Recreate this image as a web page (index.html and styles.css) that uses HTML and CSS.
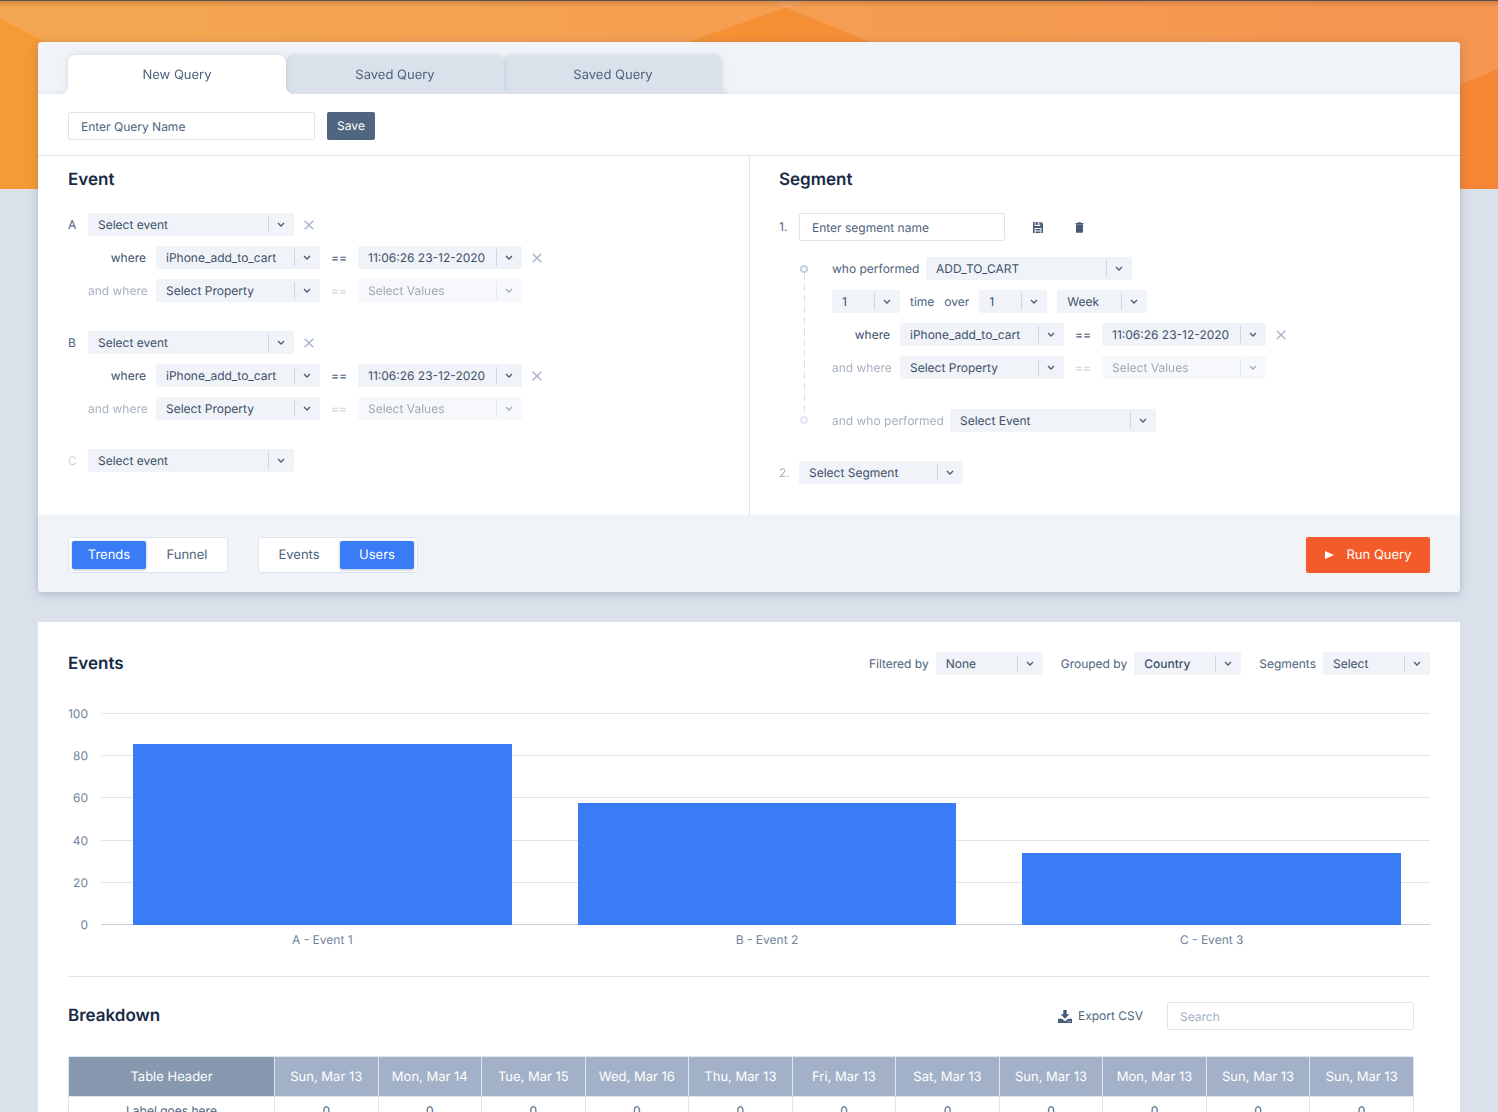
FILE: index.html
```html
<!DOCTYPE html>
<html lang="en">
<head>
<meta charset="utf-8">
<meta name="viewport" content="width=device-width, initial-scale=1">
<title>Query builder</title>
<link rel="stylesheet" href="styles.css">
</head>
<body>
<svg class="sprite" aria-hidden="true">
  <symbol id="drop" viewBox="0 0 27 23"><path d="M1.500 3v17" stroke="#cbd6e4" fill="none"/><path d="M11 10l3 3 3-3" fill="none" stroke="#465b75" stroke-width="1.3"/></symbol>
  <symbol id="cross" viewBox="0 0 10 10"><path d="M.7.7l8.600 8.600M9.300.7L.7 9.300" fill="none" stroke="#a2b1c8" stroke-width="1.3"/></symbol>
</svg>

<svg class="banner" viewBox="0 0 1498 189" preserveAspectRatio="none" aria-hidden="true">
  <defs>
    <linearGradient id="sun" x1="0" y1="0" x2="1" y2="0"><stop offset="0" stop-color="#f59b35"/><stop offset="1" stop-color="#f68535"/></linearGradient>
    <linearGradient id="edge" x1="0" y1="0" x2="0" y2="1"><stop offset="0" stop-color="#8a4a20" stop-opacity=".35"/><stop offset="1" stop-color="#8a4a20" stop-opacity="0"/></linearGradient>
  </defs>
  <path fill="url(#sun)" d="M0 0h1498v189H0z"/>
  <path fill="#f4f0ee" fill-opacity=".15" d="M0 0h808Q750 20 688 42Q340 150 44 41Q20 30 0 18z"/>
  <path fill="#f4f0ee" fill-opacity=".15" d="M768 0h730v69q-19 9-38 15Q1160 165 870 42Q815 20 768 0z"/>
  <path fill="url(#edge)" d="M0 0h1498v7H0z"/>
  <path fill="#57504f" d="M0 0h1498v1H0z"/>
</svg>

<main class="page">
  <section class="card query">
    <nav class="tabs">
      <button class="tab tab-active" type="button">New Query</button>
      <button class="tab" type="button">Saved Query</button>
      <button class="tab" type="button">Saved Query</button>
    </nav>
    <form class="name-bar">
      <input class="field field-wide" type="text" aria-label="Query name" placeholder="Enter Query Name">
      <button class="save" type="button">Save</button>
    </form>

    <div class="panels">
      <section class="panel">
        <h2>Event</h2>
        <div class="groups">
          <div class="group">
            <div class="row">
              <span class="index">A</span>
              <span class="pick pick-lg"><select aria-label="Event A"><option>Select event</option></select><svg><use href="#drop"/></svg></span>
              <button class="icon-btn" type="button" aria-label="Remove event A"><svg width="10" height="10"><use href="#cross"/></svg></button>
            </div>
            <div class="row indent">
              <span class="cond">where</span>
              <span class="pick pick-md"><select aria-label="Property"><option>iPhone_add_to_cart</option></select><svg><use href="#drop"/></svg></span>
              <span class="equals">==</span>
              <span class="pick pick-md"><select aria-label="Value"><option>11:06:26 23-12-2020</option></select><svg><use href="#drop"/></svg></span>
              <button class="icon-btn" type="button" aria-label="Remove condition"><svg width="10" height="10"><use href="#cross"/></svg></button>
            </div>
            <div class="row indent">
              <span class="cond faded">and where</span>
              <span class="pick pick-md"><select aria-label="Property"><option>Select Property</option></select><svg><use href="#drop"/></svg></span>
              <span class="equals faint">==</span>
              <span class="pick pick-md faded"><select aria-label="Value"><option>Select Values</option></select><svg><use href="#drop"/></svg></span>
            </div>
          </div>
          <div class="group">
            <div class="row">
              <span class="index">B</span>
              <span class="pick pick-lg"><select aria-label="Event B"><option>Select event</option></select><svg><use href="#drop"/></svg></span>
              <button class="icon-btn" type="button" aria-label="Remove event B"><svg width="10" height="10"><use href="#cross"/></svg></button>
            </div>
            <div class="row indent">
              <span class="cond">where</span>
              <span class="pick pick-md"><select aria-label="Property"><option>iPhone_add_to_cart</option></select><svg><use href="#drop"/></svg></span>
              <span class="equals">==</span>
              <span class="pick pick-md"><select aria-label="Value"><option>11:06:26 23-12-2020</option></select><svg><use href="#drop"/></svg></span>
              <button class="icon-btn" type="button" aria-label="Remove condition"><svg width="10" height="10"><use href="#cross"/></svg></button>
            </div>
            <div class="row indent">
              <span class="cond faded">and where</span>
              <span class="pick pick-md"><select aria-label="Property"><option>Select Property</option></select><svg><use href="#drop"/></svg></span>
              <span class="equals faint">==</span>
              <span class="pick pick-md faded"><select aria-label="Value"><option>Select Values</option></select><svg><use href="#drop"/></svg></span>
            </div>
          </div>
          <div class="group">
            <div class="row">
              <span class="index faint">C</span>
              <span class="pick pick-lg"><select aria-label="Event C"><option>Select event</option></select><svg><use href="#drop"/></svg></span>
            </div>
          </div>
        </div>
      </section>

      <section class="panel panel-split">
        <h2>Segment</h2>
        <div class="groups">
          <div class="segment">
            <div class="row">
              <span class="index">1.</span>
              <input class="field field-segment" type="text" aria-label="Segment name" placeholder="Enter segment name">
              <span class="tools">
                <button class="icon-btn" type="button" aria-label="Save segment"><svg width="10" height="11" viewBox="0 0 10 11"><path fill="#465b78" d="M0 0h1.600v3.900h5.600V0h1L10 1.800V11H8.400V6H1.600v5H0zM2.500 0h2.200v3H2.500zM5.700 0h.9v3h-.9zM2.500 7h5v1.400h-5zM2.500 9.400h5V11h-5z"/></svg></button>
                <button class="icon-btn" type="button" aria-label="Delete segment"><svg width="9" height="11" viewBox="0 0 9 11"><path fill="#465b78" d="M.5 1H3V.2h3V1h2.500v1.200h-8zM1 2.600h7V10a.8.8 0 0 1-.8.8H1.800A.8.8 0 0 1 1 10z"/></svg></button>
              </span>
            </div>
            <div class="steps">
              <div class="timeline" aria-hidden="true"><i class="dot"></i><i class="thread"></i><i class="dot faded"></i></div>
              <div class="step-list">
                <div class="group">
                  <div class="row">
                    <span class="lead">who performed</span>
                    <span class="pick pick-lg"><select aria-label="Performed event"><option>ADD_TO_CART</option></select><svg><use href="#drop"/></svg></span>
                  </div>
                  <div class="row">
                    <span class="pick pick-xs"><select aria-label="Times"><option>1</option></select><svg><use href="#drop"/></svg></span>
                    <span>time</span>
                    <span>over</span>
                    <span class="pick pick-xs"><select aria-label="Period count"><option>1</option></select><svg><use href="#drop"/></svg></span>
                    <span class="pick pick-sm"><select aria-label="Period"><option>Week</option></select><svg><use href="#drop"/></svg></span>
                  </div>
                  <div class="row">
                    <span class="cond">where</span>
                    <span class="pick pick-md"><select aria-label="Property"><option>iPhone_add_to_cart</option></select><svg><use href="#drop"/></svg></span>
                    <span class="equals">==</span>
                    <span class="pick pick-md"><select aria-label="Value"><option>11:06:26 23-12-2020</option></select><svg><use href="#drop"/></svg></span>
                    <button class="icon-btn" type="button" aria-label="Remove condition"><svg width="10" height="10"><use href="#cross"/></svg></button>
                  </div>
                  <div class="row">
                    <span class="cond faded">and where</span>
                    <span class="pick pick-md"><select aria-label="Property"><option>Select Property</option></select><svg><use href="#drop"/></svg></span>
                    <span class="equals faint">==</span>
                    <span class="pick pick-md faded"><select aria-label="Value"><option>Select Values</option></select><svg><use href="#drop"/></svg></span>
                  </div>
                </div>
                <div class="row">
                  <span class="lead lead-long faded">and who performed</span>
                  <span class="pick pick-lg"><select aria-label="Next event"><option>Select Event</option></select><svg><use href="#drop"/></svg></span>
                </div>
              </div>
            </div>
          </div>
          <div class="row">
            <span class="index faded">2.</span>
            <span class="pick pick-md"><select aria-label="Segment 2"><option>Select Segment</option></select><svg><use href="#drop"/></svg></span>
          </div>
        </div>
      </section>
    </div>

    <footer class="actions">
      <div class="toggle"><button class="on" type="button">Trends</button><button type="button">Funnel</button></div>
      <div class="toggle"><button type="button">Events</button><button class="on" type="button">Users</button></div>
      <button class="run" type="button"><svg width="9" height="8" viewBox="0 0 9 8"><path d="M0 0l9 4-9 4z" fill="#fff"/></svg>Run Query</button>
    </footer>
  </section>

  <section class="card results">
    <header class="results-head">
      <h2>Events</h2>
      <div class="filters">
        <label>Filtered by <span class="pick pick-filter"><select><option>None</option></select><svg><use href="#drop"/></svg></span></label>
        <label>Grouped by <span class="pick pick-filter strong"><select><option>Country</option></select><svg><use href="#drop"/></svg></span></label>
        <label>Segments <span class="pick pick-filter"><select><option>Select</option></select><svg><use href="#drop"/></svg></span></label>
      </div>
    </header>

    <figure class="chart">
      <ol class="scale"><li>100</li><li>80</li><li>60</li><li>40</li><li>20</li><li>0</li></ol>
      <div class="bars">
        <div class="bar" style="height:85.500%"></div>
        <div class="bar" style="height:57.500%"></div>
        <div class="bar" style="height:34%"></div>
      </div>
      <ul class="names"><li>A - Event 1</li><li>B - Event 2</li><li>C - Event 3</li></ul>
    </figure>

    <section class="breakdown">
      <header class="breakdown-head">
        <h2>Breakdown</h2>
        <button class="export" type="button"><svg width="14" height="13" viewBox="0 0 14 13"><path fill="#465b78" d="M5.300 0h3.400v4.300h2.700L7 8.700 2.600 4.300h2.700zM0 8.800h3.900L7 11.200l3.100-2.400H14V13H0z"/><path fill="#fff" d="M9.800 11.200h1v.8h-1zM11.700 11.200h1v.8h-1z"/></svg>Export CSV</button>
        <input class="field field-wide search" type="search" aria-label="Search" placeholder="Search">
      </header>
      <table>
        <thead><tr><th class="first">Table Header</th><th>Sun, Mar 13</th><th>Mon, Mar 14</th><th>Tue, Mar 15</th><th>Wed, Mar 16</th><th>Thu, Mar 13</th><th>Fri, Mar 13</th><th>Sat, Mar 13</th><th>Sun, Mar 13</th><th>Mon, Mar 13</th><th>Sun, Mar 13</th><th>Sun, Mar 13</th></tr></thead>
        <tbody><tr><td>Label goes here</td><td>0</td><td>0</td><td>0</td><td>0</td><td>0</td><td>0</td><td>0</td><td>0</td><td>0</td><td>0</td><td>0</td></tr></tbody>
      </table>
    </section>
  </section>
</main>
</body>
</html>
```

FILE: styles.css
```css
* { box-sizing: border-box; }

:root {
  --ink: #172b46;
  --text: #4d637e;
  --deep: #3d5069;
  --pale: #f0f3f8;
  --mist: #dae1eb;
  --line: #dfe5ed;
  --blue: #3a7bf6;
}

body {
  margin: 0;
  background: var(--mist);
  color: var(--text);
  font: 12px/16px Inter, "Liberation Sans", sans-serif;
  text-rendering: geometricPrecision;
}

button, input, select { font: inherit; color: inherit; margin: 0; text-rendering: inherit; }
button { border: 0; padding: 0; background: none; cursor: pointer; }
h2 { margin: 0; color: var(--ink); font-size: 17px; line-height: 20px; font-weight: 600; }
ol, ul, figure { margin: 0; padding: 0; list-style: none; }

.sprite { position: absolute; width: 0; height: 0; }
.banner { position: absolute; top: 0; left: 0; width: 100%; height: 189px; z-index: -1; }

.page { display: flex; flex-direction: column; gap: 30px; padding: 42px 38px 0; }
.card { background: #fff; }
.query { border-radius: 4px; box-shadow: 0 2px 10px rgba(70, 90, 120, .3); }

/* Tabs */
.tabs {
  display: flex;
  padding: 13px 30px 0;
  background: linear-gradient(to top, #e6eaf1, var(--pale) 4px);
  border-radius: 4px 4px 0 0;
}
.tab {
  position: relative;
  z-index: 1;
  width: 218px;
  height: 39px;
  border-radius: 8px 8px 0 0;
  background: var(--tab);
  font-size: 13px;
  filter: drop-shadow(0 0 3px rgba(70, 90, 120, .16));
  --tab: var(--mist);
}
.tab:nth-child(2) { z-index: 2; }
.tab-active { z-index: 3; --tab: #fff; }
.tab::before, .tab::after {
  content: "";
  position: absolute;
  bottom: 0;
  width: 8px;
  height: 8px;
}
.tab::before { right: 100%; background: radial-gradient(circle at 0 0, transparent 8px, var(--tab) 8px); }
.tab::after { left: 100%; background: radial-gradient(circle at 100% 0, transparent 8px, var(--tab) 8px); }

/* Fields */
.field {
  height: 28px;
  padding: 0 12px;
  border: 1px solid var(--line);
  border-radius: 2px;
  background: #fff;
  outline: 0;
}
.field::placeholder { color: var(--text); opacity: 1; }
.field-wide { width: 247px; }
.field-segment { width: 206px; }
.search::placeholder { color: #a3b1c6; }

.name-bar {
  position: relative;
  z-index: 4;
  display: flex;
  gap: 12px;
  padding: 18px 30px 15px;
  background: #fff;
  border-bottom: 1px solid var(--line);
}
.save { width: 48px; border-radius: 2px; background: #50657f; color: #fff; }

.pick { display: inline-grid; color: var(--deep); }
.pick select {
  grid-area: 1 / 1;
  width: 100%;
  height: 23px;
  padding: 0 30px 0 10px;
  border: 0;
  border-radius: 2px;
  background: var(--pale);
  appearance: none;
}
.pick svg { grid-area: 1 / 1; justify-self: end; width: 27px; height: 23px; pointer-events: none; }
.pick-lg { width: 206px; }
.pick-md { width: 164px; }
.pick-filter { width: 107px; }
.pick-sm { width: 90px; }
.pick-xs { width: 68px; }
.strong { font-weight: 500; }
.faded { opacity: .5; }
.faint { opacity: .3; }

/* Builder */
.panels { display: grid; grid-template-columns: 1fr 1fr; }
.panel { padding: 14px 30px 32px; }
.panel-split { border-left: 1px solid var(--line); padding-left: 29px; }
.groups { display: flex; flex-direction: column; gap: 29px; margin-top: 23px; }
.group { display: flex; flex-direction: column; gap: 10px; }
.row { display: flex; align-items: center; gap: 10px; white-space: nowrap; }
.index { width: 10px; }
.indent { padding-left: 20px; }
.cond { width: 58px; text-align: right; color: var(--deep); }
.cond.faded { color: var(--text); }
.lead { width: 84px; }
.lead-long { width: 108px; }
.equals { width: 18px; text-align: center; font-weight: 500; }
.icon-btn { display: flex; }
.tools { display: flex; gap: 32px; padding-left: 18px; }

.segment { display: flex; flex-direction: column; gap: 16px; }
.steps { display: flex; gap: 24px; padding-left: 21px; }
.step-list { display: flex; flex-direction: column; gap: 30px; }
.timeline { display: flex; flex-direction: column; align-items: center; width: 8px; padding: 8px 0; }
.dot { width: 8px; height: 8px; border: 2px solid #c3d0df; border-radius: 50%; }
.thread { flex: 1; width: 1px; background: repeating-linear-gradient(to bottom, #dae1eb 0 7px, transparent 7px 11px); }

/* Footer actions */
.actions {
  display: flex;
  gap: 30px;
  padding: 21px 30px 19px;
  background: var(--pale);
  border-radius: 0 0 4px 4px;
  box-shadow: 0 -1px 3px rgba(70, 90, 120, .08);
}
.toggle {
  display: flex;
  justify-content: space-between;
  width: 160px;
  height: 36px;
  padding: 3px;
  border: 1px solid var(--line);
  border-radius: 3px;
  background: #fff;
}
.toggle button { width: 74px; border-radius: 2px; font-size: 13px; }
.toggle .on { background: var(--blue); color: #fff; box-shadow: 0 1px 3px rgba(40, 60, 90, .35); }
.run {
  display: flex;
  align-items: center;
  justify-content: center;
  gap: 13px;
  width: 124px;
  margin-left: auto;
  border-radius: 2px;
  background: #f35b2a;
  color: #fff;
  font-size: 13px;
}

/* Results */
.results { padding: 30px 30px 0; }
.results-head, .breakdown-head { display: flex; align-items: center; }
.results-head { justify-content: space-between; }
.filters { display: flex; gap: 18px; }
.filters label { display: flex; align-items: center; gap: 7px; }

.chart { display: grid; grid-template-rows: 226px auto; margin-top: 31px; color: #71849d; line-height: 15px; }
.scale { grid-area: 1 / 1; display: flex; flex-direction: column; justify-content: space-between; }
.scale li { display: grid; grid-template-columns: 20px 1fr; gap: 13px; align-items: center; justify-items: end; }
.scale li::after { content: ""; width: 100%; height: 1px; background: var(--line); }
.scale li:last-child::after { background: #c5cfde; }
.bars, .names { display: grid; grid-template-columns: repeat(3, 1fr); gap: 66px; }
.bars { grid-area: 1 / 1; align-items: end; padding: 7px 29px 7px 65px; }
.bar { background: var(--blue); }
.names { padding: 0 29px 0 65px; text-align: center; }

.breakdown { margin-top: 29px; padding: 25px 16px 0 0; border-top: 1px solid var(--line); }
.export { display: flex; align-items: center; gap: 6px; margin: 0 24px 0 auto; }

table {
  width: 100%;
  margin-top: 26px;
  table-layout: fixed;
  border-collapse: separate;
  border-spacing: 0;
  border: 1px solid var(--line);
  border-radius: 2px;
  text-align: center;
}
th { height: 39px; padding: 0; background: #a3b1c8; color: #fff; font-size: 13px; font-weight: 400; }
th.first { width: 205px; background: #8799af; }
td { height: 29px; padding: 0; border-top: 1px solid var(--line); }
th + th, td + td { border-left: 1px solid var(--line); }
```
